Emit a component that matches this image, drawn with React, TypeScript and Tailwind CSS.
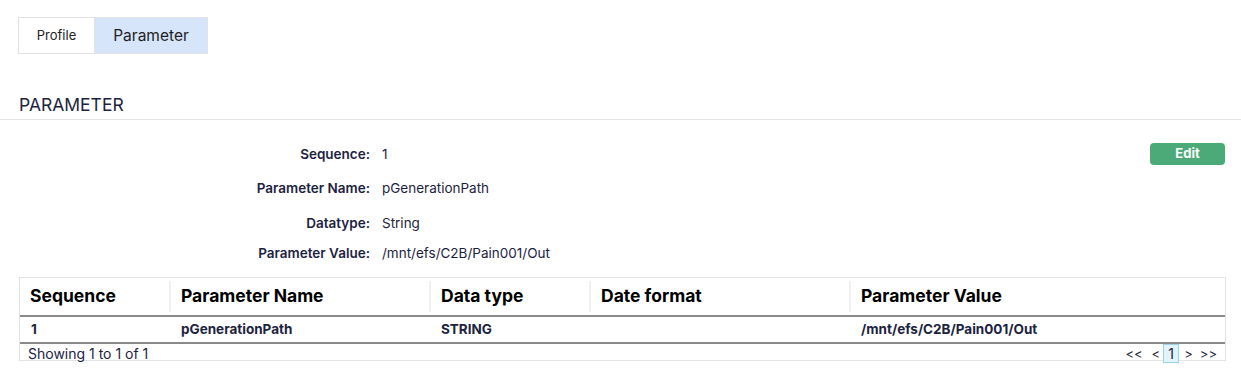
const rows = [
  { label: "Sequence:", value: "1", cls: "" },
  { label: "Parameter Name:", value: "pGenerationPath", cls: "mt-[12px]" },
  { label: "Datatype:", value: "String", cls: "mt-[13px]" },
  { label: "Parameter Value:", value: "/mnt/efs/C2B/Pain001/Out", cls: "mt-[8px]" },
];

const cols = ["Sequence", "Parameter Name", "Data type", "Date format", "Parameter Value"];
const cells = ["1", "pGenerationPath", "STRING", "", "/mnt/efs/C2B/Pain001/Out"];

export default function App() {
  return (
    <main
      className="min-h-screen bg-white text-[#1c2340]"
      style={{ fontFamily: "Inter, 'Noto Sans', sans-serif" }}
    >
      <div className="px-[18px] pt-[17px]">
        <div className="flex h-[37px] w-fit border border-[#e2e2e2]">
          <button className="flex w-[75px] items-center justify-center bg-white text-[13px] text-[#222]">
            Profile
          </button>
          <button className="flex w-[113px] items-center justify-center border-l border-[#e2e2e2] bg-[#d7e5fb] text-[15.5px] text-[#222]">
            Parameter
          </button>
        </div>
      </div>

      <div className="mt-[40px] border-b border-[#e3e3e3] pb-[3px] pl-[19px]">
        <h2 className="text-[17.5px] leading-[22px] text-[#1c2340]">PARAMETER</h2>
      </div>

      <div className="relative pr-[16px] pt-[23px]">
        <div className="flex flex-col">
          {rows.map((r) => (
            <div key={r.label} className={`flex h-[22px] items-center gap-[12px] text-[13.5px] ${r.cls}`}>
              <span className="w-[370px] text-right font-semibold">{r.label}</span>
              <span>{r.value}</span>
            </div>
          ))}
        </div>
        <button className="absolute right-[16px] top-[23px] h-[22px] w-[75px] rounded-[4px] bg-[#4caa79] text-[13px] font-bold text-white">
          Edit
        </button>
      </div>

      <div className="ml-[19px] mr-[15px] mt-[13px] border border-b-0 border-[#e3e3e3]">
        <div className="grid h-[39px] grid-cols-[149px_260px_160px_260px_1fr] items-center border-b-2 border-[#8a8a8a]">
          {cols.map((c, i) => (
            <div key={c} className="flex h-full items-center">
              {i > 0 && <span className="mr-[10px] h-[31px] w-[2px] bg-[#f0f0f0]" />}
              <span className={`text-[17.5px] font-bold text-black ${i === 0 ? "pl-[10px]" : ""}`}>{c}</span>
            </div>
          ))}
        </div>
        <div className="grid h-[27px] grid-cols-[149px_260px_160px_260px_1fr] items-center border-b-2 border-[#8a8a8a] text-[13.5px] font-bold">
          {cells.map((c, i) => (
            <div key={i} className={i === 0 ? "pl-[11px]" : "pl-[12px]"}>
              {c}
            </div>
          ))}
        </div>
        <div className="flex h-[17px] items-center justify-between border-b border-[#e3e3e3] pl-[8px] pr-[8px] pt-[3px] text-[14px] leading-[14px]">
          <span>Showing 1 to 1 of 1</span>
          <div className="flex items-center text-[13px]">
            <span>&lt;&lt;</span>
            <span className="ml-[9px]">&lt;</span>
            <span className="ml-[3px] flex h-[19px] w-[16px] items-center justify-center border border-[#9bd3ea] bg-[#e1f3fb] text-[14px]">
              1
            </span>
            <span className="ml-[5px]">&gt;</span>
            <span className="ml-[7px]">&gt;&gt;</span>
          </div>
        </div>
      </div>
    </main>
  );
}
